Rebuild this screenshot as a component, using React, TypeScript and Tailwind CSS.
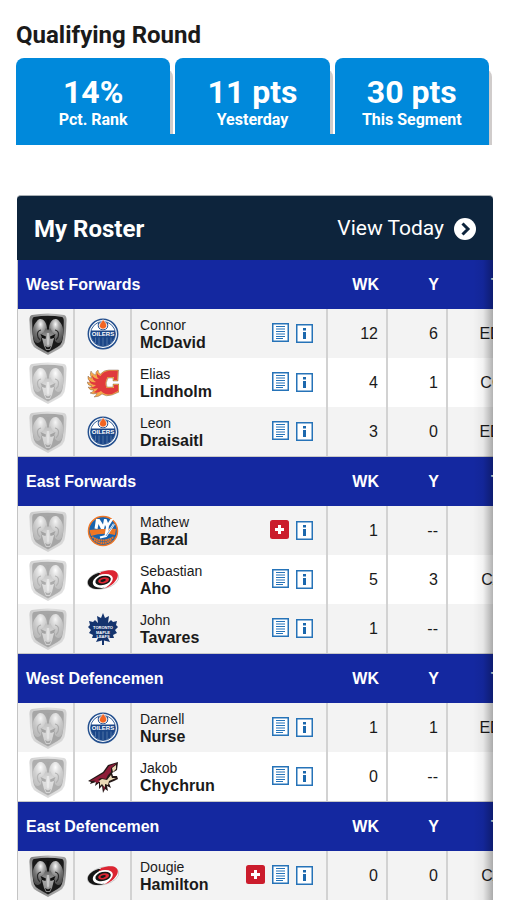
import React from "react";

type Team = "EDM" | "CGY" | "NYI" | "CAR" | "TOR" | "ARI";
type Badge = "news" | "injury";

interface Player {
  first: string;
  last: string;
  logo: Team;
  week: string;
  yesterday: string;
  today?: string;
  badges: Badge[];
  active?: boolean;
}

interface Group {
  title: string;
  players: Player[];
}

const groups: Group[] = [
  {
    title: "West Forwards",
    players: [
      { first: "Connor", last: "McDavid", logo: "EDM", week: "12", yesterday: "6", today: "EDM", badges: ["news"], active: true },
      { first: "Elias", last: "Lindholm", logo: "CGY", week: "4", yesterday: "1", today: "CGY", badges: ["news"] },
      { first: "Leon", last: "Draisaitl", logo: "EDM", week: "3", yesterday: "0", today: "EDM", badges: ["news"] },
    ],
  },
  {
    title: "East Forwards",
    players: [
      { first: "Mathew", last: "Barzal", logo: "NYI", week: "1", yesterday: "--", badges: ["injury"] },
      { first: "Sebastian", last: "Aho", logo: "CAR", week: "5", yesterday: "3", today: "CAR", badges: ["news"] },
      { first: "John", last: "Tavares", logo: "TOR", week: "1", yesterday: "--", badges: ["news"] },
    ],
  },
  {
    title: "West Defencemen",
    players: [
      { first: "Darnell", last: "Nurse", logo: "EDM", week: "1", yesterday: "1", today: "EDM", badges: ["news"] },
      { first: "Jakob", last: "Chychrun", logo: "ARI", week: "0", yesterday: "--", badges: ["news"] },
    ],
  },
  {
    title: "East Defencemen",
    players: [
      { first: "Dougie", last: "Hamilton", logo: "CAR", week: "0", yesterday: "0", today: "CAR", badges: ["injury", "news"], active: true },
    ],
  },
];

const stats = [
  { value: "14%", label: "Pct. Rank" },
  { value: "11 pts", label: "Yesterday" },
  { value: "30 pts", label: "This Segment" },
];

function RamShield({ active }: { active?: boolean }) {
  return (
    <svg viewBox="0 0 38 42" className={`mx-auto block h-[42px] w-[38px] ${active ? "" : "opacity-35"}`} aria-hidden="true">
      <defs>
        <linearGradient id="rim" x1="0" y1="0" x2="1" y2="1">
          <stop offset="0" stopColor="#777" />
          <stop offset="0.3" stopColor="#bbb" />
          <stop offset="0.65" stopColor="#888" />
          <stop offset="1" stopColor="#ccc" />
        </linearGradient>
        <radialGradient id="hornLeft" cx="0.55" cy="0.22" r="0.75">
          <stop offset="0" stopColor="#fafafa" />
          <stop offset="0.3" stopColor="#b0b0b0" />
          <stop offset="0.6" stopColor="#7a7a7a" />
          <stop offset="1" stopColor="#505050" />
        </radialGradient>
        <radialGradient id="hornRight" cx="0.45" cy="0.22" r="0.75">
          <stop offset="0" stopColor="#fafafa" />
          <stop offset="0.3" stopColor="#b0b0b0" />
          <stop offset="0.6" stopColor="#7a7a7a" />
          <stop offset="1" stopColor="#505050" />
        </radialGradient>
        <linearGradient id="face" x1="0" y1="0" x2="0" y2="1">
          <stop offset="0" stopColor="#5e5e5e" />
          <stop offset="0.5" stopColor="#a5a5a5" />
          <stop offset="1" stopColor="#8a8a8a" />
        </linearGradient>
      </defs>
      <path d="M3 2 Q19 -1 35 2 Q38 3 37.500 8 C37 15 37.500 21 35.500 30 Q34 34 30 36 L19 42 L8 36 Q4 34 2.500 30 C0.500 21 1 15 0.500 8 Q0 3 3 2Z" fill="url(#rim)" />
      <path d="M5 4 Q19 1.500 33 4 Q35 4.500 34.800 9 C34.500 16 35 21 33 29 Q32 32 28.500 34 L19 39.500 L9.500 34 Q6 32 5 29 C3 21 3.500 16 3.200 9 Q3 4.500 5 4Z" fill="#1a1a1a" />
      <path d="M18 15 C17 6 11 4 8 8 C3 13 3 20 5 27 Q6 30 9 30 Q13 29 12 25 L14 20 L18 21Z" fill="url(#hornLeft)" />
      <path d="M20 15 C21 6 27 4 30 8 C35 13 35 20 33 27 Q32 30 29 30 Q25 29 26 25 L24 20 L20 21Z" fill="url(#hornRight)" />
      <path d="M12 17 Q8 18 8.500 22 Q8.500 25 11 27 M26 17 Q30 18 29.500 22 Q29.500 25 27 27" fill="none" stroke="#2b2b2b" strokeWidth="1.200" />
      <path d="M17 15 L19 17 L21 15 L24 20 L26 23 L24.500 27 L23 33 L21 37 H17 L15 33 L13.500 27 L12 23 L14 20Z" fill="url(#face)" />
      <path d="M11.500 21 L17 23.500 L16.500 26 L13 25Z M26.500 21 L21 23.500 L21.500 26 L25 25Z M16 33 L19 34.500 L22 33 L20.500 36 H17.500Z M17.500 6 L19 17 L20.500 6Z" fill="#111" />
      <path d="M17.800 20 H20.200 L20.200 31 L19 33 L17.800 31Z" fill="#d8d8d8" opacity="0.7" />
    </svg>
  );
}

function OilersLogo() {
  return (
    <svg viewBox="0 0 32 32" className="mx-auto block size-8" aria-label="Edmonton">
      <circle cx="16" cy="16" r="14.700" fill="#fff" stroke="#24508f" strokeWidth="1.500" />
      <circle cx="16" cy="16" r="12.500" fill="#fff" stroke="#24508f" strokeWidth="0.900" />
      <path d="M4 18.500 H28 A12.300 12.300 0 0 1 4 18.500Z" fill="#1b4688" />
      <path d="M8.500 19 V25 M12 19 V28 M16 19 V28 M20 19 V28 M24 19 V25" stroke="#7390ba" strokeWidth="0.600" />
      <rect x="4" y="12.500" width="24" height="7" fill="#1b4688" />
      <text x="16" y="18.300" textAnchor="middle" fontSize="6" fontWeight="700" fill="#fff" fontFamily="'Liberation Sans', sans-serif">OILERS</text>
      <path d="M11.500 5 Q10 11.500 16 11.800 Q22 11.500 20.500 5Z" fill="#fff" stroke="#24508f" />
      <path d="M16 1.500 C19 5 20 6.500 19.500 8.500 A3.700 3.700 0 0 1 12.500 8.500 C12 6.500 14 5 16 1.500Z" fill="#f26522" stroke="#fff" strokeWidth="0.500" />
    </svg>
  );
}

function FlamesLogo() {
  return (
    <svg viewBox="0 0 32 32" className="mx-auto block size-8" aria-label="Calgary">
      <path d="M31.500 3 H22 Q17 3 13.500 7 Q11 6 11 3 Q8 5 9 8 Q5 7 4 4 Q2 8 5 11 Q2 11 1 9 Q0 13 4 15 Q2 16 0 15 Q1 19 5 19 Q3 21 1 20 Q3 24 7 23 Q5 26 3 26 Q7 28 10 26 Q9 29 7 30 Q12 30 15 27 Q19 30 25 28 L32 25 V17 H26 V20 H20 Q18 16 21 11 H26 V14 H31Z" fill="#f5a94b" stroke="#6b4b40" strokeWidth="0.400" />
      <path d="M30.800 3.800 H23 Q16 4 13.500 9 Q10.500 8 10 6 Q9 10 12 12 Q7 12 5 8 Q5 13 9 15 Q5 16 2 13 Q3 18 9 18 Q6 21 3 20 Q6 23 11 21 Q9 25 6 25 Q10 27 14 24 Q18 28.500 25 27 L31 24 V18 H27 V21 H19.500 Q17 16 20.500 10 H27 V13 H30Z" fill="#e03a3e" />
    </svg>
  );
}

function IslandersLogo() {
  return (
    <svg viewBox="0 0 32 32" className="mx-auto block size-8" aria-label="New York">
      <circle cx="16" cy="16" r="14.500" fill="#1763ae" stroke="#ef7624" strokeWidth="1.500" />
      <path d="M2.500 15 L8 14.500 L24 13.500 L29 14 L28 20 Q16 17 4 21Z" fill="#ef7624" />
      <path d="M7.500 13.500 L9 4 H12.500 L16 9.500 L17 4 H19.500 L21 8 L23.500 4 H26.500 L22 11 L20.500 20 L17.500 21 L19 12 L18 10 L17 14 H14 L11.500 9 L10.500 14Z" fill="#fff" />
      <path d="M27 9 L19 21 L13 22.500" fill="none" stroke="#fff" strokeWidth="2.200" />
      <path d="M27 9 L19 21" fill="none" stroke="#1763ae" strokeWidth="0.600" />
      <path d="M5 22 Q16 29 27 22 M7 25 Q16 31 25 25" fill="none" stroke="#ef7624" strokeWidth="2" strokeDasharray="1.800 0.500" />
    </svg>
  );
}

function HurricanesLogo() {
  return (
    <svg viewBox="0 0 32 32" className="mx-auto block size-8" aria-label="Carolina">
      <g transform="rotate(-14 16 16)">
        <ellipse cx="16" cy="16" rx="16" ry="8.700" fill="#fff" stroke="#bbb" strokeWidth="0.700" />
        <path d="M13 8 C-2 9 -3 20 7 23 Q11 24.500 16 24 C6 22.500 3 18 7 13.500 Q11 10 19 9.500Z" fill="#161616" />
        <path d="M16 7.800 C31 6.500 35 13 29 19 Q24 24 15 24.500 C24 22 28 17 25 13.500 Q22 10 13 10Z" fill="#dc2532" />
        <ellipse cx="16" cy="16.500" rx="9.200" ry="5.600" fill="#fff" />
        <ellipse cx="16" cy="16.500" rx="7.900" ry="4.500" fill="#171717" />
        <ellipse cx="16.500" cy="16.500" rx="5.500" ry="2.900" fill="#dc2532" />
        <ellipse cx="16" cy="16.500" rx="2.800" ry="1.300" fill="#171717" />
      </g>
    </svg>
  );
}

function LeafsLogo() {
  return (
    <svg viewBox="0 0 32 32" className="mx-auto block size-8" aria-label="Toronto">
      <path d="M16 0 L18 5 L22 3 L21 10 L24 7 L26 9 L30 8 L29 12 L31 14 L28 17 L30 20 L26 22 L27 25 L21 25 L23 29 L17 27.500 L17 32 H15 V27.500 L9 29 L11 25 L5 25 L6 22 L2 20 L4 17 L1 14 L3 12 L2 8 L6 9 L8 7 L11 10 L10 3 L14 5Z" fill="#14346e" />
      <g fill="#fff" fontFamily="'Liberation Sans', sans-serif" fontWeight="700" textAnchor="middle">
        <text x="16" y="16" fontSize="4">TORONTO</text>
        <text x="16" y="20.500" fontSize="4">MAPLE</text>
        <text x="16" y="25" fontSize="4">LEAFS</text>
      </g>
    </svg>
  );
}

function CoyotesLogo() {
  return (
    <svg viewBox="0 0 32 32" className="mx-auto block size-8" aria-label="Arizona">
      <path d="M31 1 L21 4 L16 11 L1 20 L4 21 L3 23 L9 21 L8 25 L12 22 L12 28 L15 25 L16 32 L18 28 L21 30 L20 25 L24 27 L22 22 L27 20 L31 18 L30 15 L26 15 L25 12 L30 9Z" fill="#241817" />
      <path d="M30 2 L22 5 L17 12 L3 20 L9 19.500 L14 17 L19 18 L21 14 L24 11 L24 7Z" fill="#8e1c38" />
      <path d="M29 4 L25 7 L26 11 L29 8Z M10 21 L15 18 L20 19 L24 14 L25 17 L29 17 L22 20 L21 24 L18 23 L18 27 L15 23 L13 25 L13 21Z" fill="#ead9b6" />
      <path d="M7 20 L11 18 L13 20 L10 22Z M16 25 L17 30 L18 26Z" fill="#8e1c38" />
    </svg>
  );
}

const logos: Record<Team, () => React.JSX.Element> = {
  EDM: OilersLogo,
  CGY: FlamesLogo,
  NYI: IslandersLogo,
  CAR: HurricanesLogo,
  TOR: LeafsLogo,
  ARI: CoyotesLogo,
};

function NewsIcon() {
  return (
    <svg viewBox="0 0 17 19" className="block h-[19px] w-[17px]" aria-hidden="true">
      <rect x="0.750" y="0.750" width="15.500" height="17.500" fill="#fff" stroke="#2673b8" strokeWidth="1.500" />
      <path d="M4 3.500 H13 M4 6 H13 M4 8.500 H13 M4 11 H13 M4 13.500 H13 M4 15.500 H11" stroke="#2673b8" strokeWidth="1.100" />
    </svg>
  );
}

function InfoIcon() {
  return (
    <svg viewBox="0 0 17 19" className="block h-[19px] w-[17px]" aria-hidden="true">
      <rect x="0.750" y="0.750" width="15.500" height="17.500" fill="#fff" stroke="#2673b8" strokeWidth="1.500" />
      <path d="M7 4 H10 V6.500 H7Z M7 8 H10 V15 H7Z" fill="#1c68ad" />
    </svg>
  );
}

function InjuryIcon() {
  return (
    <svg viewBox="0 0 19 19" className="block size-[19px]" aria-hidden="true">
      <rect width="19" height="19" rx="2.500" fill="#cb1c2c" />
      <path d="M9.500 5 V14 M5 9.500 H14" stroke="#fff" strokeWidth="3" />
    </svg>
  );
}

function PlayerRow({ player }: { player: Player }) {
  const Logo = logos[player.logo];
  const name = `${player.first} ${player.last}`;
  return (
    <tr className="h-[49px] odd:bg-white even:bg-[#f3f3f3]">
      <td className="border-r-2 border-[#d2d2d2] p-0 pl-1">
        <RamShield active={player.active} />
      </td>
      <td className="border-r-2 border-[#d2d2d2] p-0">
        <Logo />
      </td>
      <td className="border-r-2 border-[#d2d2d2] p-0 pr-[13px] pl-2">
        <div className="flex items-center justify-between">
          <div>
            <div className="text-[14px] leading-[18px]">{player.first}</div>
            <div className="leading-[18px] font-bold">{player.last}</div>
          </div>
          <div className="flex items-center gap-[7px]">
            {player.badges.map((badge) => (
              <button key={badge} type="button" aria-label={`${badge}: ${name}`} className="mb-0.5">
                {badge === "news" ? <NewsIcon /> : <InjuryIcon />}
              </button>
            ))}
            <button type="button" aria-label={`Info: ${name}`}>
              <InfoIcon />
            </button>
          </div>
        </div>
      </td>
      <td className="border-r-2 border-[#d2d2d2] p-0 pr-2 text-right">{player.week}</td>
      <td className="border-r-2 border-[#d2d2d2] p-0 pr-2 text-right">{player.yesterday}</td>
      <td className="p-0 pr-2 text-right">{player.today}</td>
    </tr>
  );
}

export default function App() {
  return (
    <main className="bg-white pt-5 font-['Roboto',sans-serif] text-[#1a1a1a]">
      <section className="mr-[21px] ml-4">
        <h1 className="text-2xl leading-[30px] font-bold">Qualifying Round</h1>
        <div className="mt-2 grid grid-cols-3 gap-[5px] text-center font-bold text-white">
          {stats.map((stat) => (
            <div key={stat.label} className="h-[76px] rounded-t-lg bg-[#0089db] pt-4 shadow-[3px_11px_0_#d0cccb]">
              <div className="text-[32px] leading-9">{stat.value}</div>
              <div className="text-base leading-5">{stat.label}</div>
            </div>
          ))}
        </div>
        <div className="relative h-[11px] bg-[#0089db]" />
      </section>

      <section className="mx-[17px] mt-[50px]">
        <header className="flex h-[65px] items-center justify-between rounded-t border-t border-[#a9b0b5] bg-[#0d243c] px-[17px] pt-0.5 text-white">
          <h2 className="text-2xl font-bold">My Roster</h2>
          <a href="#today" className="flex items-center gap-[10px] text-[21px] font-normal">
            View Today
            <svg viewBox="0 0 22 22" className="block size-[22px]" aria-hidden="true">
              <circle cx="11" cy="11" r="11" fill="#fff" />
              <path d="M8.500 5.500 L14 11 L8.500 16.500" fill="none" stroke="#0d243c" strokeWidth="3" />
            </svg>
          </a>
        </header>
        <div className="relative overflow-hidden border-l border-[#c4c4c4]">
          <table className="w-[calc(100%+30px)] table-fixed border-separate border-spacing-0 font-['Liberation_Sans',sans-serif] text-[16px] leading-[20px]">
            <colgroup>
              <col className="w-[57px]" />
              <col className="w-[57px]" />
              <col />
              <col className="w-[60px]" />
              <col className="w-[60px]" />
              <col className="w-[75px]" />
            </colgroup>
            {groups.map((group, index) => (
              <tbody key={group.title}>
                <tr className="h-[49px] bg-[#1428a0] text-white">
                  <th colSpan={3} className="p-0 pl-2 text-left">{group.title}</th>
                  <th className="p-0 pr-[9px] text-right">WK</th>
                  <th className="p-0 pr-[9px] text-right">Y</th>
                  <th className="p-0 pr-[9px] text-right">TM</th>
                </tr>
                {group.players.map((player) => (
                  <PlayerRow key={player.last} player={player} />
                ))}
                {index < groups.length - 1 && (
                  <tr aria-hidden="true">
                    <td colSpan={6} className="h-px bg-[#c8c8c8] p-0" />
                  </tr>
                )}
              </tbody>
            ))}
          </table>
          <div className="pointer-events-none absolute inset-y-0 right-0 w-5 bg-linear-to-r from-transparent via-black/5 to-black/30" />
        </div>
      </section>
    </main>
  );
}
